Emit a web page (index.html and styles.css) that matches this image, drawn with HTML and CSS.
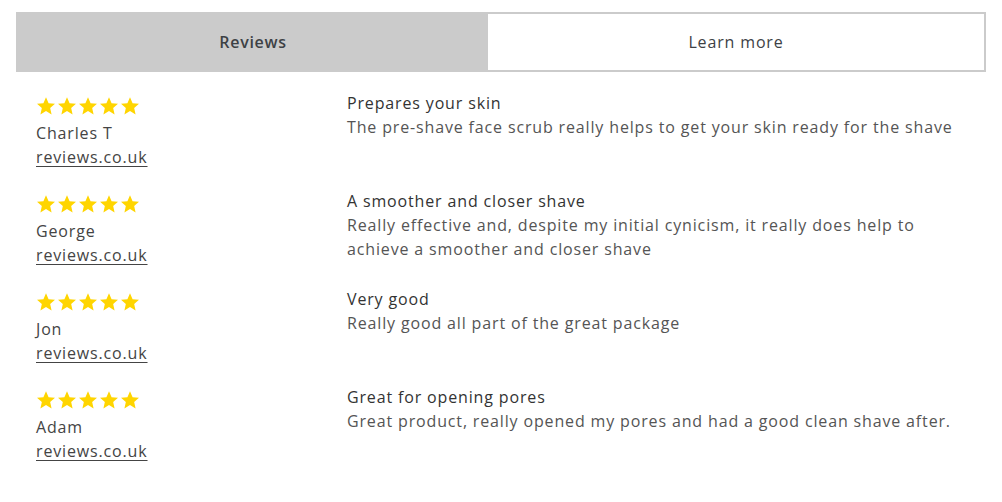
FILE: index.html
```html
<!DOCTYPE html>
<html lang="en">
<head>
<meta charset="utf-8">
<title>Reviews</title>
<link rel="stylesheet" href="styles.css">
</head>
<body>
<div class="page">
  <div class="tabs">
    <div class="tab tab-active">Reviews</div>
    <div class="tab">Learn more</div>
  </div>
  <div class="reviews">
    <div class="review">
      <div class="author">
        <div class="stars">
          <svg class="star" viewBox="1.2 1.5 21.6 20.8"><path d="M12 1.5l3.1 7.1 7.7.7-5.8 5.1 1.7 7.6L12 18l-6.7 4 1.7-7.6-5.8-5.1 7.7-.7z"/></svg>
          <svg class="star" viewBox="1.2 1.5 21.6 20.8"><path d="M12 1.5l3.1 7.1 7.7.7-5.8 5.1 1.7 7.6L12 18l-6.7 4 1.7-7.6-5.8-5.1 7.7-.7z"/></svg>
          <svg class="star" viewBox="1.2 1.5 21.6 20.8"><path d="M12 1.5l3.1 7.1 7.7.7-5.8 5.1 1.7 7.6L12 18l-6.7 4 1.7-7.6-5.8-5.1 7.7-.7z"/></svg>
          <svg class="star" viewBox="1.2 1.5 21.6 20.8"><path d="M12 1.5l3.1 7.1 7.7.7-5.8 5.1 1.7 7.6L12 18l-6.7 4 1.7-7.6-5.8-5.1 7.7-.7z"/></svg>
          <svg class="star" viewBox="1.2 1.5 21.6 20.8"><path d="M12 1.5l3.1 7.1 7.7.7-5.8 5.1 1.7 7.6L12 18l-6.7 4 1.7-7.6-5.8-5.1 7.7-.7z"/></svg>
        </div>
        <div class="name">Charles T</div>
        <a class="source" href="#">reviews.co.uk</a>
      </div>
      <div class="content">
        <div class="title">Prepares your skin</div>
        <div class="body">The pre-shave face scrub really helps to get your skin ready for the shave</div>
      </div>
    </div>
    <div class="review">
      <div class="author">
        <div class="stars">
          <svg class="star" viewBox="1.2 1.5 21.6 20.8"><path d="M12 1.5l3.1 7.1 7.7.7-5.8 5.1 1.7 7.6L12 18l-6.7 4 1.7-7.6-5.8-5.1 7.7-.7z"/></svg>
          <svg class="star" viewBox="1.2 1.5 21.6 20.8"><path d="M12 1.5l3.1 7.1 7.7.7-5.8 5.1 1.7 7.6L12 18l-6.7 4 1.7-7.6-5.8-5.1 7.7-.7z"/></svg>
          <svg class="star" viewBox="1.2 1.5 21.6 20.8"><path d="M12 1.5l3.1 7.1 7.7.7-5.8 5.1 1.7 7.6L12 18l-6.7 4 1.7-7.6-5.8-5.1 7.7-.7z"/></svg>
          <svg class="star" viewBox="1.2 1.5 21.6 20.8"><path d="M12 1.5l3.1 7.1 7.7.7-5.8 5.1 1.7 7.6L12 18l-6.7 4 1.7-7.6-5.8-5.1 7.7-.7z"/></svg>
          <svg class="star" viewBox="1.2 1.5 21.6 20.8"><path d="M12 1.5l3.1 7.1 7.7.7-5.8 5.1 1.7 7.6L12 18l-6.7 4 1.7-7.6-5.8-5.1 7.7-.7z"/></svg>
        </div>
        <div class="name">George</div>
        <a class="source" href="#">reviews.co.uk</a>
      </div>
      <div class="content">
        <div class="title">A smoother and closer shave</div>
        <div class="body">Really effective and, despite my initial cynicism, it really does help to achieve a smoother and closer shave</div>
      </div>
    </div>
    <div class="review">
      <div class="author">
        <div class="stars">
          <svg class="star" viewBox="1.2 1.5 21.6 20.8"><path d="M12 1.5l3.1 7.1 7.7.7-5.8 5.1 1.7 7.6L12 18l-6.7 4 1.7-7.6-5.8-5.1 7.7-.7z"/></svg>
          <svg class="star" viewBox="1.2 1.5 21.6 20.8"><path d="M12 1.5l3.1 7.1 7.7.7-5.8 5.1 1.7 7.6L12 18l-6.7 4 1.7-7.6-5.8-5.1 7.7-.7z"/></svg>
          <svg class="star" viewBox="1.2 1.5 21.6 20.8"><path d="M12 1.5l3.1 7.1 7.7.7-5.8 5.1 1.7 7.6L12 18l-6.7 4 1.7-7.6-5.8-5.1 7.7-.7z"/></svg>
          <svg class="star" viewBox="1.2 1.5 21.6 20.8"><path d="M12 1.5l3.1 7.1 7.7.7-5.8 5.1 1.7 7.6L12 18l-6.7 4 1.7-7.6-5.8-5.1 7.7-.7z"/></svg>
          <svg class="star" viewBox="1.2 1.5 21.6 20.8"><path d="M12 1.5l3.1 7.1 7.7.7-5.8 5.1 1.7 7.6L12 18l-6.7 4 1.7-7.6-5.8-5.1 7.7-.7z"/></svg>
        </div>
        <div class="name">Jon</div>
        <a class="source" href="#">reviews.co.uk</a>
      </div>
      <div class="content">
        <div class="title">Very good</div>
        <div class="body">Really good all part of the great package</div>
      </div>
    </div>
    <div class="review">
      <div class="author">
        <div class="stars">
          <svg class="star" viewBox="1.2 1.5 21.6 20.8"><path d="M12 1.5l3.1 7.1 7.7.7-5.8 5.1 1.7 7.6L12 18l-6.7 4 1.7-7.6-5.8-5.1 7.7-.7z"/></svg>
          <svg class="star" viewBox="1.2 1.5 21.6 20.8"><path d="M12 1.5l3.1 7.1 7.7.7-5.8 5.1 1.7 7.6L12 18l-6.7 4 1.7-7.6-5.8-5.1 7.7-.7z"/></svg>
          <svg class="star" viewBox="1.2 1.5 21.6 20.8"><path d="M12 1.5l3.1 7.1 7.7.7-5.8 5.1 1.7 7.6L12 18l-6.7 4 1.7-7.6-5.8-5.1 7.7-.7z"/></svg>
          <svg class="star" viewBox="1.2 1.5 21.6 20.8"><path d="M12 1.5l3.1 7.1 7.7.7-5.8 5.1 1.7 7.6L12 18l-6.7 4 1.7-7.6-5.8-5.1 7.7-.7z"/></svg>
          <svg class="star" viewBox="1.2 1.5 21.6 20.8"><path d="M12 1.5l3.1 7.1 7.7.7-5.8 5.1 1.7 7.6L12 18l-6.7 4 1.7-7.6-5.8-5.1 7.7-.7z"/></svg>
        </div>
        <div class="name">Adam</div>
        <a class="source" href="#">reviews.co.uk</a>
      </div>
      <div class="content">
        <div class="title">Great for opening pores</div>
        <div class="body">Great product, really opened my pores and had a good clean shave after.</div>
      </div>
    </div>
  </div>
</div>
</body>
</html>
```
FILE: styles.css
```css
* { box-sizing: border-box; }
html, body { margin: 0; padding: 0; background: #fff; }
body {
  font-family: "Open Sans", "Noto Sans", "DejaVu Sans", sans-serif;
  font-size: 16px;
  line-height: 24px;
  color: #444;
}
.page { padding: 12px 16px 0 16px; }
.tabs {
  display: flex;
  height: 60px;
  border: 2px solid #cbcbcb;
  background: #fff;
}
.tab {
  display: flex;
  align-items: center;
  justify-content: center;
  flex: 1;
  color: #3d4145;
  letter-spacing: 0.85px;
  padding-bottom: 1px;
}
.tab-active {
  flex: 0 0 470px;
  background: #cbcbcb;
  font-weight: 600;
  letter-spacing: 0.7px;
}
.reviews {
  padding: 19px 20px 0 20px;
}
.review {
  display: flex;
  margin-bottom: 20px;
}
.author {
  flex: 0 0 311px;
}
.stars {
  display: flex;
  gap: 3px;
  height: 18px;
  margin: 6px 0;
  padding-left: 1px;
}
.star { width: 18px; height: 18px; fill: #ffd500; }
.name { color: #444; letter-spacing: 0.85px; }
.source {
  display: block;
  width: max-content;
  color: #444;
  letter-spacing: 0.85px;
  text-decoration: underline;
  text-underline-offset: 3px;
}
.content { flex: 1; }
.title { color: #333; letter-spacing: 0.85px; }
.body { color: #555; letter-spacing: 0.85px; }
```
